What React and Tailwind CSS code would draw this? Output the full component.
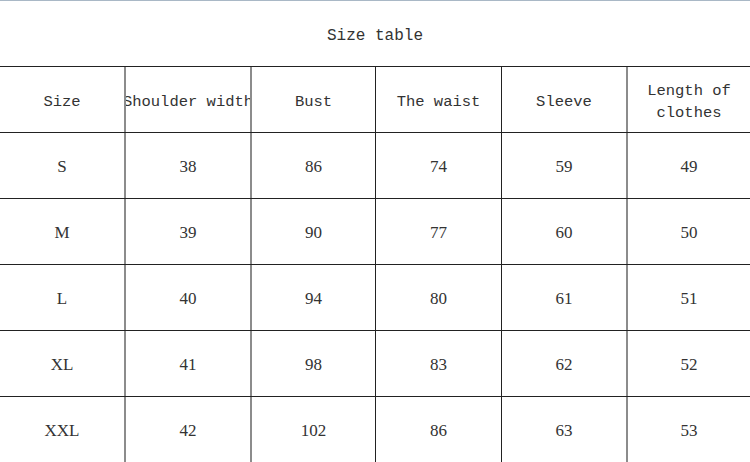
export default function App() {
  const mono = { fontFamily: '"Liberation Mono", "DejaVu Sans Mono", monospace' };
  const cols = [
    { w: "w-[124px]", b: "" },
    { w: "w-[126px]", b: "border-l-2 border-[#8c8c8c]" },
    { w: "w-[125px]", b: "border-l-2 border-[#8c8c8c]" },
    { w: "w-[126px]", b: "border-l border-[#222]" },
    { w: "w-[125px]", b: "border-l border-[#222]" },
    { w: "w-[124px]", b: "border-l-2 border-[#8c8c8c]" },
  ];
  const header = ["Size", "Shoulder width", "Bust", "The waist", "Sleeve", "Length of clothes"];
  const rows = [
    ["S", "38", "86", "74", "59", "49"],
    ["M", "39", "90", "77", "60", "50"],
    ["L", "40", "94", "80", "61", "51"],
    ["XL", "41", "98", "83", "62", "52"],
    ["XXL", "42", "102", "86", "63", "53"],
  ];
  return (
    <div className="w-[750px] h-[462px] bg-white overflow-hidden border-t border-[#a9b8c6] text-[#333]">
      <div className="h-[65px] flex items-center justify-center pt-[5px] text-[16px]" style={mono}>
        Size table
      </div>
      <div className="flex h-[66px] border-t border-[#222]">
        {header.map((h, i) => (
          <div
            key={i}
            className={`${cols[i].w} ${cols[i].b} shrink-0 flex items-center justify-center overflow-hidden whitespace-nowrap pt-[4px] text-[15.5px] leading-[22px]`}
            style={mono}
          >
            {i === 5 ? (
              <div className="text-center">Length of<br />clothes</div>
            ) : (
              h
            )}
          </div>
        ))}
      </div>
      {rows.map((r, ri) => (
        <div key={ri} className="flex h-[66px] border-t border-[#222]">
          {r.map((c, i) => (
            <div
              key={i}
              className={`${cols[i].w} ${cols[i].b} shrink-0 flex items-center justify-center pt-[3px] text-[17px]`}
              style={{ fontFamily: '"Liberation Serif", "DejaVu Serif", serif' }}
            >
              {c}
            </div>
          ))}
        </div>
      ))}
    </div>
  );
}
